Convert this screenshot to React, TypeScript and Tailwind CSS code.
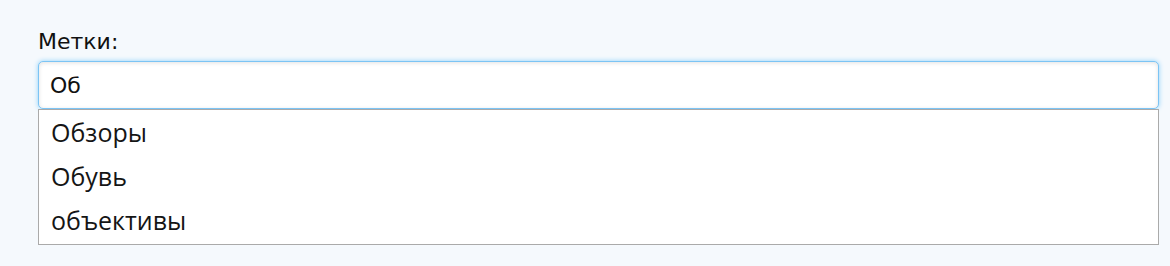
import { useState } from 'react';

const suggestions = ['Обзоры', 'Обувь', 'объективы'];

export default function App() {
  const [value, setValue] = useState('Об');

  return (
    <div className="min-h-[266px] w-full bg-[#f5f9fd] pl-[38px] pr-[11px] pt-[27px]">
      <label className="block mb-[4px] font-['DejaVu_Sans',sans-serif] text-[22px] leading-[30px] text-[#111]">
        Метки:
      </label>
      <input
        autoFocus
        value={value}
        onChange={(e) => setValue(e.target.value)}
        className="block w-full h-[48px] rounded-[5px] border border-[#7cc4f4] bg-white px-[11px] font-['DejaVu_Sans',sans-serif] text-[22px] text-[#111] caret-black outline-none shadow-[0_0_5px_#8fd2fb,inset_0_1px_4px_rgba(0,0,0,0.12)]"
      />
      {/* Autocomplete list */}
      <ul className="border border-[#aaa] bg-white py-[1px] font-['Open_Sans',sans-serif]">
        {suggestions.map((s) => (
          <li key={s} className="flex h-[44px] items-center px-[12px] text-[25px] text-[#151515]">
            {s}
          </li>
        ))}
      </ul>
    </div>
  );
}
